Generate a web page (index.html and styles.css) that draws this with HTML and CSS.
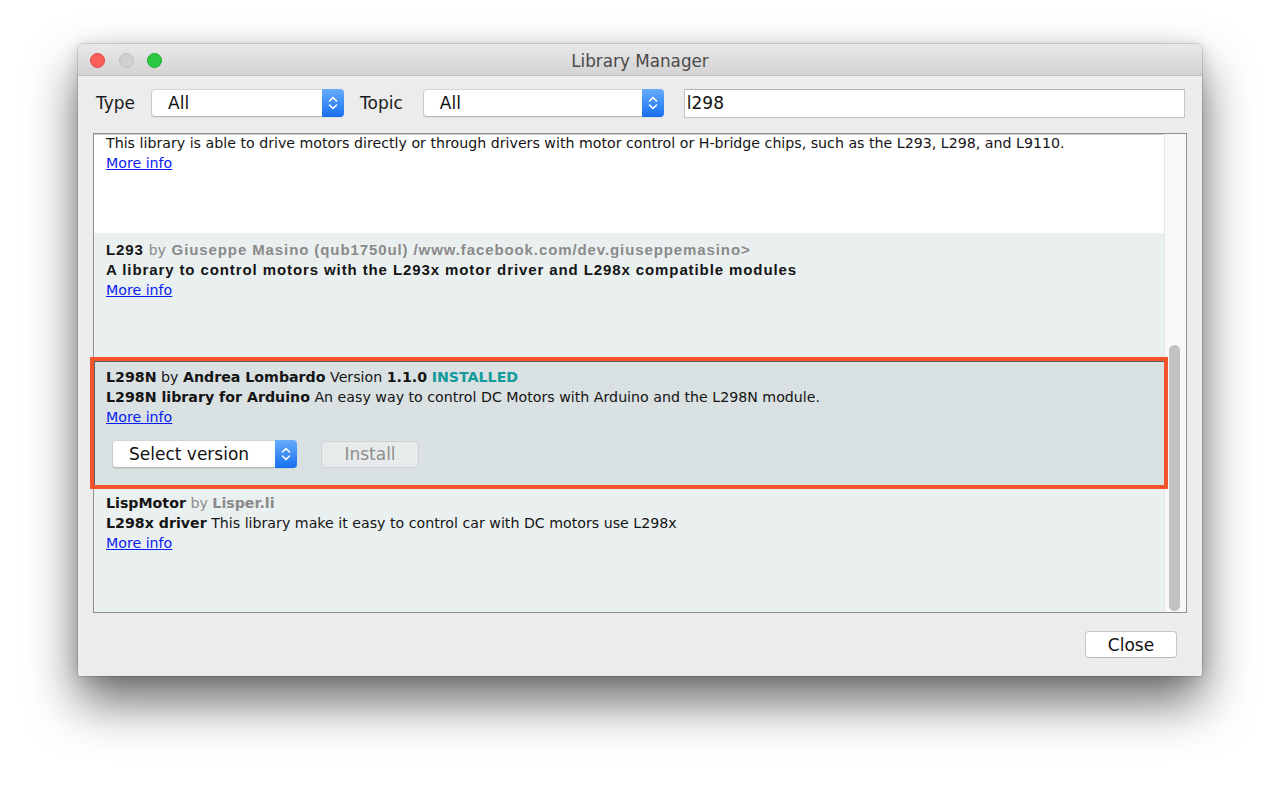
FILE: index.html
```html
<!DOCTYPE html>
<html lang="en">
<head>
<meta charset="utf-8">
<title>Library Manager</title>
<link rel="stylesheet" href="styles.css">
</head>
<body>
<div class="window">
  <div class="titlebar">
    <div class="lights">
      <span class="light red"></span>
      <span class="light gray"></span>
      <span class="light green"></span>
    </div>
    <div class="title">Library Manager</div>
    <div class="spacer"></div>
  </div>

  <div class="toolbar">
    <span class="label type-label">Type</span>
    <div class="select type-select">
      <span class="select-value">All</span>
      <span class="select-btn"><svg width="12" height="20" viewBox="0 0 12 20"><polyline points="2.5,8 6,4.5 9.5,8" fill="none" stroke="#fff" stroke-width="1.6" stroke-linecap="round" stroke-linejoin="round"/><polyline points="2.5,12 6,15.5 9.5,12" fill="none" stroke="#fff" stroke-width="1.6" stroke-linecap="round" stroke-linejoin="round"/></svg></span>
    </div>
    <span class="label topic-label">Topic</span>
    <div class="select topic-select">
      <span class="select-value">All</span>
      <span class="select-btn"><svg width="12" height="20" viewBox="0 0 12 20"><polyline points="2.5,8 6,4.5 9.5,8" fill="none" stroke="#fff" stroke-width="1.6" stroke-linecap="round" stroke-linejoin="round"/><polyline points="2.5,12 6,15.5 9.5,12" fill="none" stroke="#fff" stroke-width="1.6" stroke-linecap="round" stroke-linejoin="round"/></svg></span>
    </div>
    <div class="search">l298</div>
  </div>

  <div class="list">
    <div class="list-content">
      <div class="row row-white">
        <div class="line first-line">This library is able to drive motors directly or through drivers with motor control or H-bridge chips, such as the L293, L298, and L9110.</div>
        <div class="line"><a class="more" href="#">More info</a></div>
      </div>

      <div class="row row-alt row-l293">
        <div class="line helv"><b>L293</b> <span class="by">by</span> <b class="author">Giuseppe Masino (qub1750ul) /www.facebook.com/dev.giuseppemasino&gt;</b></div>
        <div class="line helv"><b>A library to control motors with the L293x motor driver and L298x compatible modules</b></div>
        <div class="line"><a class="more" href="#">More info</a></div>
      </div>

      <div class="row row-selected">
        <div class="line"><b>L298N</b> by <b>Andrea Lombardo</b> Version <b>1.1.0</b> <b class="installed">INSTALLED</b></div>
        <div class="line"><b>L298N library for Arduino</b> An easy way to control DC Motors with Arduino and the L298N module.</div>
        <div class="line"><a class="more" href="#">More info</a></div>
        <div class="controls">
          <div class="select version-select">
            <span class="select-value">Select version</span>
            <span class="select-btn"><svg width="12" height="20" viewBox="0 0 12 20"><polyline points="2.5,8 6,4.5 9.5,8" fill="none" stroke="#fff" stroke-width="1.6" stroke-linecap="round" stroke-linejoin="round"/><polyline points="2.5,12 6,15.5 9.5,12" fill="none" stroke="#fff" stroke-width="1.6" stroke-linecap="round" stroke-linejoin="round"/></svg></span>
          </div>
          <button class="install" disabled>Install</button>
        </div>
      </div>

      <div class="row row-alt row-last">
        <div class="line"><b>LispMotor</b> <span class="by">by</span> <b class="author">Lisper.li</b></div>
        <div class="line"><b>L298x driver</b> This library make it easy to control car with DC motors use L298x</div>
        <div class="line"><a class="more" href="#">More info</a></div>
      </div>
    </div>
    <div class="scrollbar"><div class="thumb"></div></div>
  </div>

  <div class="footer">
    <button class="close">Close</button>
  </div>
</div>
</body>
</html>
```

FILE: styles.css
```css
html, body {
  margin: 0;
  background: #ffffff;
}
body {
  padding: 44px 0 0 78px;
  height: 789px;
  box-sizing: border-box;
  overflow: hidden;
  font-family: "DejaVu Sans", Verdana, sans-serif;
}

.window {
  width: 1124px;
  height: 632px;
  background: #ececec;
  border-radius: 5px 5px 2px 2px;
  box-shadow: 0 26px 50px rgba(0, 0, 0, 0.58), 0 0 0 1px rgba(0, 0, 0, 0.12), 0 2px 16px rgba(0, 0, 0, 0.14);
  display: flex;
  flex-direction: column;
  overflow: hidden;
}

/* title bar */
.titlebar {
  border-bottom: 1px solid #c2c2c2;
  background: linear-gradient(#e9e9e9, #d3d3d3);
  display: grid;
  grid-template-columns: 1fr auto 1fr;
  align-items: center;
  padding-top: 2px;
  box-sizing: border-box;
  height: 32px;
}
.lights {
  display: flex;
  gap: 13.5px;
  padding-left: 12px;
}
.light {
  width: 15px;
  height: 15px;
  border-radius: 50%;
  box-sizing: border-box;
}
.light.red { background: #fc5f57; border: 1px solid #e0443e; }
.light.gray { background: #d0d0d0; border: 1px solid #bcbcbc; }
.light.green { background: #2ac840; border: 1px solid #1aab2b; }
.title {
  font-size: 16.8px;
  color: #4a4a4a;
}

/* toolbar */
.toolbar {
  display: flex;
  align-items: center;
  padding: 13px 17px 0 18px;
  height: 28px;
}
.label {
  font-size: 17px;
  color: #1a1a1a;
}
.type-label {
  margin-right: 16px;
}
.topic-label {
  margin-left: 16px;
  margin-right: 20px;
}
.select {
  height: 28px;
  box-sizing: border-box;
  background: #fff;
  border: 1px solid #c9c9c9;
  border-top-color: #d4d4d4;
  border-bottom-color: #b9b9b9;
  border-radius: 4px;
  display: flex;
  align-items: stretch;
  box-shadow: 0 1px 1px rgba(0, 0, 0, 0.06);
}
.select-value {
  flex: 1;
  font-size: 17px;
  color: #111;
  padding-left: 16px;
  line-height: 26px;
}
.select-btn {
  width: 22px;
  margin: -1px -1px -1px 0;
  border-radius: 0 4px 4px 0;
  background: linear-gradient(#68acfa, #1770f1);
  display: flex;
  align-items: center;
  justify-content: center;
}
.type-select { width: 193px; }
.topic-select { width: 241px; }
.search {
  flex: 1;
  margin-left: 20px;
  height: 29px;
  box-sizing: border-box;
  background: #fff;
  border: 1px solid #c4c4c4;
  border-top-color: #b5b5b5;
  font-size: 17px;
  line-height: 27px;
  padding-left: 2px;
  color: #111;
}

/* list */
.list {
  margin: 16px 15px 0 15px;
  height: 480px;
  box-sizing: border-box;
  border: 1px solid #8f8f8f;
  box-shadow: inset 1px 1px 0 #c8c8c8;
  display: flex;
  background: #fff;
}
.list-content {
  flex: 1;
  margin-top: 1px;
  display: flex;
  flex-direction: column;
}
.row {
  padding: 7px 12px 0 12px;
  box-sizing: border-box;
  font-size: 14.2px;
  color: #141414;
}
.line {
  height: 20px;
  line-height: 20px;
  white-space: nowrap;
}
.row-white {
  background: #fff;
  height: 98px;
  padding-top: 0;
}
.first-line {
  height: 18px;
  line-height: 16px;
}
.row-alt {
  background: #eaf0f0;
}
.row-l293 {
  height: 128px;
}
.helv {
  font-family: "Liberation Sans", Arial, sans-serif;
  font-size: 15px;
  letter-spacing: 0.9px;
}
.row-selected {
  height: 124px;
  padding-top: 6px;
  background: #d9e1e2;
  outline: 4px solid #f3532a;
  box-shadow: inset 1px 1px 0 #5b5f60;
  position: relative;
}
.row-last {
  flex: 1;
  padding-top: 8px;
}
.by { color: #8a8a8a; }
.author { color: #8a8a8a; }
.installed { color: #139a9a; }
.more {
  color: #0a1cf0;
  text-decoration: underline;
}

.controls {
  display: flex;
  align-items: center;
  margin-top: 13px;
  margin-left: 6px;
  gap: 24px;
}
.version-select { width: 185px; }
.install {
  width: 98px;
  height: 27px;
  box-sizing: border-box;
  background: #e7ebeb;
  border: 1px solid #cdd2d3;
  border-radius: 4px;
  font-family: "DejaVu Sans", Verdana, sans-serif;
  font-size: 17px;
  color: #8d8d8d;
  padding: 0;
}

.scrollbar {
  width: 22px;
  background: #f8f8f8;
  border-left: 1px solid #e7e7e7;
  box-sizing: border-box;
  padding: 211px 0 0 4px;
}
.thumb {
  width: 11px;
  height: 266px;
  border-radius: 6px;
  background: #c2c2c2;
}

/* footer */
.footer {
  display: flex;
  justify-content: flex-end;
  padding: 18px 25px 0 0;
}
.close {
  width: 92px;
  height: 27px;
  box-sizing: border-box;
  background: #fff;
  border: 1px solid #c6c6c6;
  border-bottom-color: #b5b5b5;
  border-radius: 4px;
  font-family: "DejaVu Sans", Verdana, sans-serif;
  font-size: 17px;
  color: #111;
  padding: 0;
}
```
